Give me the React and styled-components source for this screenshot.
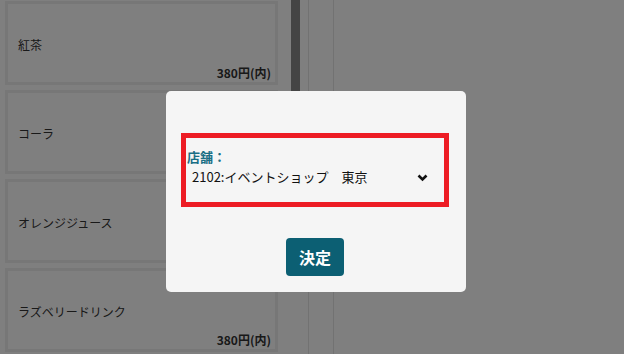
import React from "react";
import styled, { createGlobalStyle } from "styled-components";

const GlobalStyle = createGlobalStyle`
  html, body {
    margin: 0;
    padding: 0;
    background: #ffffff;
  }
  body {
    font-family: "Noto Sans CJK JP", "Noto Sans", sans-serif;
    color: #333;
  }
  * {
    box-sizing: border-box;
  }
`;

const items = [
  { name: "紅茶", price: "380円(内)" },
  { name: "コーラ", price: "380円(内)" },
  { name: "オレンジジュース", price: "380円(内)" },
  { name: "ラズベリードリンク", price: "380円(内)" },
];

const App = () => {
  return (
    <>
      <GlobalStyle />
      <Page>
        <ItemList>
          {items.map((item) => (
            <ItemCard key={item.name}>
              <ItemName>{item.name}</ItemName>
              <ItemPrice>{item.price}</ItemPrice>
            </ItemCard>
          ))}
        </ItemList>
        <ScrollTrack>
          <ScrollThumb />
        </ScrollTrack>
        <SidePane>
          <SideInner />
        </SidePane>
      </Page>

      <Overlay>
        <Modal>
          <FieldBox>
            <FieldLabel>店舗：</FieldLabel>
            <SelectBox>
              <span>2102:イベントショップ　東京</span>
              <svg width="11" height="8" viewBox="0 0 11 8">
                <polyline
                  points="1.5,1.5 5.5,5.5 9.5,1.5"
                  fill="none"
                  stroke="#111"
                  strokeWidth="2.6"
                />
              </svg>
            </SelectBox>
          </FieldBox>
          <DecideButton>決定</DecideButton>
        </Modal>
      </Overlay>
    </>
  );
};

export default App;

const Page = styled.div`
  display: flex;
  height: 354px;
  overflow: hidden;
  background: #ffffff;
`;

const ItemList = styled.div`
  width: 291px;
  padding: 1px 0 0 5px;
  display: flex;
  flex-direction: column;
  gap: 5px;
  flex-shrink: 0;
`;

const ItemCard = styled.div`
  width: 273px;
  height: 84px;
  flex-shrink: 0;
  border: 3px solid #efefef;
  background: #ffffff;
  padding: 5px 4px 1px 10px;
  display: grid;
  grid-template-rows: 1fr auto 1fr;
`;

const ItemName = styled.div`
  grid-row: 2;
  font-size: 12px;
  line-height: 16px;
  color: #333;
`;

const ItemPrice = styled.div`
  grid-row: 3;
  align-self: end;
  justify-self: end;
  font-size: 12px;
  line-height: 16px;
  font-weight: 600;
  color: #333;
`;

const ScrollTrack = styled.div`
  width: 9px;
  flex-shrink: 0;
`;

const ScrollThumb = styled.div`
  width: 9px;
  height: 210px;
  background: #888888;
`;

const SidePane = styled.div`
  flex: 1;
  margin-left: 8px;
  border-left: 1px solid #e4e4e4;
  padding-left: 24px;
`;

const SideInner = styled.div`
  height: 100%;
  border-left: 1px solid #e4e4e4;
`;

const Overlay = styled.div`
  position: fixed;
  inset: 0;
  background: rgba(0, 0, 0, 0.5);
  display: flex;
  justify-content: center;
  align-items: flex-start;
  padding: 91px 0 0 8px;
`;

const Modal = styled.div`
  width: 300px;
  height: 201px;
  background: #f5f5f5;
  border-radius: 5px;
  padding: 42px 17px 16px 15px;
  display: flex;
  flex-direction: column;
`;

const FieldBox = styled.div`
  width: 268px;
  height: 74px;
  border: 5px solid #ed1c24;
  padding: 11px 0 0 1px;
  display: flex;
  flex-direction: column;
  gap: 3px;
`;

const FieldLabel = styled.div`
  font-size: 13px;
  line-height: 16px;
  height: 16px;
  font-weight: 700;
  color: #1a6f85;
`;

const SelectBox = styled.div`
  display: flex;
  align-items: center;
  justify-content: space-between;
  height: 18px;
  line-height: 18px;
  padding: 0 16px 0 5px;
  font-size: 13px;
  color: #111;

  svg {
    margin-top: 1px;
  }
`;

const DecideButton = styled.button`
  align-self: center;
  margin-top: 31px;
  width: 58px;
  height: 38px;
  border: none;
  border-radius: 4px;
  background: #0c5f73;
  color: #ffffff;
  font-family: "Noto Sans CJK JP", sans-serif;
  font-size: 16px;
  font-weight: 700;
  padding: 0;
  cursor: pointer;
`;
